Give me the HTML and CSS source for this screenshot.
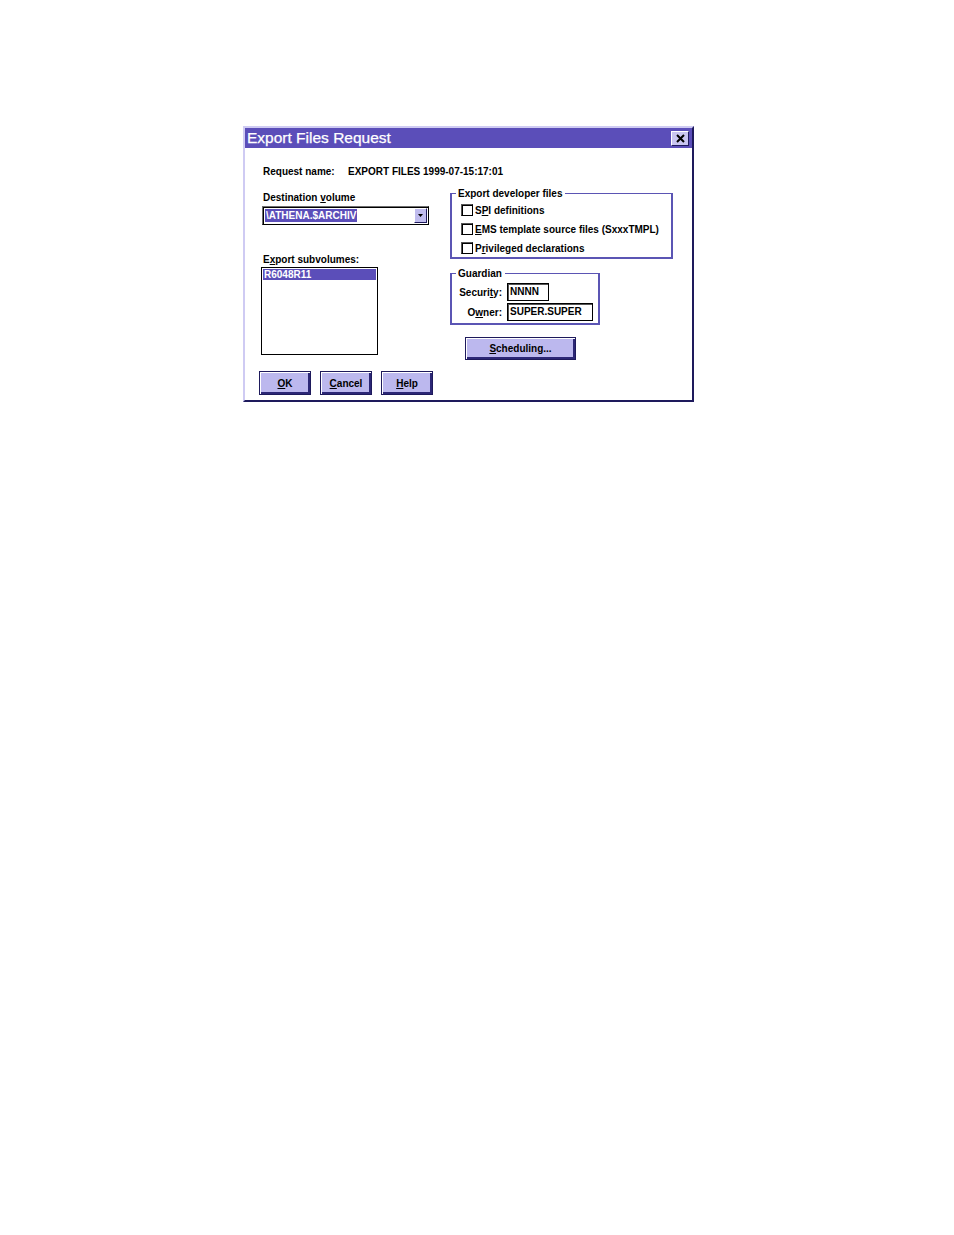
FILE: index.html
```html
<!DOCTYPE html>
<html>
<head>
<meta charset="utf-8">
<link rel="stylesheet" href="styles.css">
</head>
<body>
<div class="dialog">
  <div class="titlebar">
    <span class="title">Export Files Request</span>
    <span class="close"><svg width="9" height="9" viewBox="0 0 9 9"><path d="M1 1 L8 8 M8 1 L1 8" stroke="#000" stroke-width="2"/></svg></span>
  </div>
  <div class="content">
    <div class="reqrow"><span class="reqlabel">Request name:</span><span class="reqval">EXPORT FILES 1999-07-15:17:01</span></div>
    <div class="main">
      <div class="leftcol">
        <div class="label">Destination <u>v</u>olume</div>
        <div class="combo">
          <span class="combosel">\ATHENA.$ARCHIV</span>
          <span class="combobtn"><svg width="5" height="3" viewBox="0 0 5 3"><path d="M0 0 H5 L2.5 3 Z" fill="#000"/></svg></span>
        </div>
        <div class="label sublabel">E<u>x</u>port subvolumes:</div>
        <div class="listbox"><div class="listsel">R6048R11</div></div>
      </div>
      <div class="rightcol">
        <div class="group devgroup">
          <span class="legend">Export developer files</span>
          <div class="check"><span class="box"></span><span>S<u>P</u>I definitions</span></div>
          <div class="check"><span class="box"></span><span><u>E</u>MS template source files (SxxxTMPL)</span></div>
          <div class="check"><span class="box"></span><span>P<u>r</u>ivileged declarations</span></div>
        </div>
        <div class="group guardgroup">
          <span class="legend">Guardian</span>
          <div class="field"><span class="flabel">Securi<u>t</u>y:</span><span class="input sec">NNNN</span></div>
          <div class="field"><span class="flabel">O<u>w</u>ner:</span><span class="input own">SUPER.SUPER</span></div>
        </div>
        <div class="btn sched"><u>S</u>cheduling...</div>
      </div>
    </div>
    <div class="buttons">
      <div class="btn"><u>O</u>K</div>
      <div class="btn"><u>C</u>ancel</div>
      <div class="btn"><u>H</u>elp</div>
    </div>
  </div>
</div>
</body>
</html>
```

FILE: styles.css
```css
html, body {
  margin: 0;
  padding: 0;
  background: #ffffff;
}
body {
  font-family: "Liberation Sans", Arial, sans-serif;
  font-size: 10px;
  font-weight: bold;
  color: #000;
}
.dialog {
  margin: 126px 0 0 243px;
  width: 451px;
  height: 276px;
  box-sizing: border-box;
  border-top: 2px solid #cfcbf3;
  border-left: 2px solid #cfcbf3;
  border-right: 2px solid #1e1a5c;
  border-bottom: 2px solid #1e1a5c;
  background: #fff;
  display: flex;
  flex-direction: column;
}
.titlebar {
  height: 20px;
  background: #5b4eb9;
  display: flex;
  align-items: center;
  justify-content: space-between;
  padding: 0 3px 0 2px;
}
.title {
  color: #fff;
  font-size: 15.5px;
  font-weight: normal;
  -webkit-text-stroke: 0.25px #fff;
}
.close {
  width: 18px;
  height: 15px;
  box-sizing: border-box;
  background: #c9c5f1;
  border-top: 1px solid #fff;
  border-left: 1px solid #fff;
  border-right: 1px solid #1e1a5c;
  border-bottom: 1px solid #1e1a5c;
  display: flex;
  align-items: center;
  justify-content: center;
}
.content {
  flex: 1;
  padding-left: 16px;
  display: flex;
  flex-direction: column;
}
.reqrow {
  margin-top: 17px;
  height: 14px;
  line-height: 14px;
  padding-left: 2px;
  display: flex;
}
.reqlabel {
  width: 85px;
}
.reqval {
  font-weight: 600;
}
.main {
  display: flex;
  height: 185px;
  margin-top: 7px;
}
.leftcol {
  width: 189px;
  display: flex;
  flex-direction: column;
}
.label {
  margin-top: 5px;
  height: 13px;
  line-height: 13px;
  padding-left: 2px;
}
.sublabel {
  margin-top: 28px;
}
.combo {
  margin-top: 2px;
  margin-left: 1px;
  width: 167px;
  height: 19px;
  box-sizing: border-box;
  border-top: 1px solid #6e6e6e;
  border-left: 1px solid #6e6e6e;
  border-right: 1px solid #000;
  border-bottom: 1px solid #000;
  box-shadow: inset 1px 1px 0 #000;
  display: flex;
  align-items: center;
  justify-content: space-between;
  padding: 0 1px 0 2px;
}
.combosel {
  background: #5b4eb9;
  color: #fff;
  line-height: 13px;
  padding: 0 1px;
}
.combobtn {
  width: 13px;
  height: 15px;
  box-sizing: border-box;
  background: #c0bcee;
  border-top: 1px solid #fff;
  border-left: 1px solid #fff;
  border-right: 1px solid #1e1a5c;
  border-bottom: 1px solid #1e1a5c;
  display: flex;
  align-items: center;
  justify-content: center;
}
.listbox {
  margin-top: 1px;
  width: 117px;
  height: 88px;
  box-sizing: border-box;
  border: 1px solid #000;
  padding: 1px;
}
.listsel {
  background: #5b4eb9;
  color: #fff;
  height: 11px;
  line-height: 11px;
  padding-left: 1px;
}
.rightcol {
  display: flex;
  flex-direction: column;
}
.group {
  position: relative;
  box-sizing: border-box;
  border: 2px solid #5b55b4;
  border-top-width: 1px;
}
.legend {
  position: absolute;
  top: -7px;
  left: 4px;
  background: #fff;
  padding: 0 3px 0 2px;
  line-height: 13px;
}
.devgroup {
  margin-top: 7px;
  width: 223px;
  height: 66px;
  padding: 7px 0 0 9px;
}
.check {
  display: flex;
  align-items: center;
  height: 19px;
}
.box {
  width: 12px;
  height: 12px;
  box-sizing: border-box;
  border-top: 1px solid #555;
  border-left: 1px solid #555;
  border-right: 1px solid #000;
  border-bottom: 1px solid #000;
  box-shadow: inset 1px 1px 0 #000;
  margin-right: 2px;
  margin-top: -2px;
}
.guardgroup {
  margin-top: 14px;
  width: 150px;
  height: 52px;
  padding: 8px 0 0 0;
}
.field {
  display: flex;
  align-items: center;
  height: 20px;
}
.flabel {
  width: 55px;
  text-align: right;
  padding-right: 5px;
  box-sizing: border-box;
}
.input {
  height: 18px;
  line-height: 16px;
  box-sizing: border-box;
  border: 1px solid #000;
  box-shadow: inset 1px 1px 0 #555;
  padding-left: 2px;
}
.sec { width: 42px; }
.own { width: 86px; }
.btn {
  width: 52px;
  height: 24px;
  box-sizing: border-box;
  background: #bcb8ee;
  border: 1px solid #1e1a5c;
  box-shadow: inset 1px 1px 0 #fff, inset -2px -2px 0 #2c2776;
  display: flex;
  align-items: center;
  justify-content: center;
}
.sched {
  margin-top: 12px;
  margin-left: 15px;
  width: 111px;
  height: 23px;
}
.buttons {
  display: flex;
  gap: 9px;
  margin-left: -2px;
}
```
